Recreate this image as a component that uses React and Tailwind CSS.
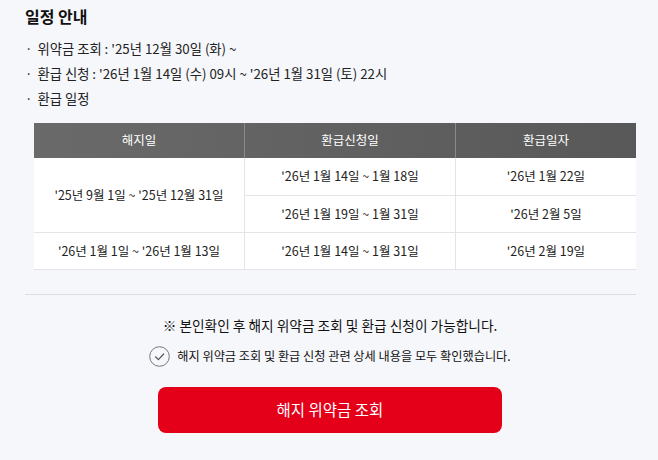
export default function App() {
  const font = { fontFamily: '"Noto Sans CJK KR", "Noto Sans", sans-serif' };
  return (
    <div className="h-[460px] w-[658px] overflow-hidden bg-[#f6f7fb] text-[#222]" style={font}>
      <div className="px-[25px] pt-[3px]">
        <h2 className="text-[16px] font-bold leading-[26px] text-[#111]">일정 안내</h2>
        <ul className="mt-[10px] flex flex-col gap-[5px] text-[13.3px] leading-[20px] text-[#222]">
          <li className="flex gap-[5px]"><span>·</span><span>위약금 조회 : '25년 12월 30일 (화) ~</span></li>
          <li className="flex gap-[5px]"><span>·</span><span>환급 신청 : '26년 1월 14일 (수) 09시 ~ '26년 1월 31일 (토) 22시</span></li>
          <li className="flex gap-[5px]"><span>·</span><span>환급 일정</span></li>
        </ul>

        <div className="ml-[9px] mt-[14px] w-[602px] text-[12.5px] text-[#222]">
          <div className="grid h-[35px] grid-cols-[211px_211px_180px] bg-gradient-to-r from-[#6a6a6a] to-[#585858] text-white">
            <div className="flex items-center justify-center border-r border-[#8a8a8a]">해지일</div>
            <div className="flex items-center justify-center border-r border-[#8a8a8a]">환급신청일</div>
            <div className="flex items-center justify-center">환급일자</div>
          </div>
          <div className="grid grid-cols-[211px_211px_180px] bg-white">
            <div className="row-span-2 flex items-center justify-center border-b border-r border-[#e4e4e6]">'25년 9월 1일 ~ '25년 12월 31일</div>
            <div className="flex h-[38px] items-center justify-center border-b border-r border-[#e4e4e6]">'26년 1월 14일 ~ 1월 18일</div>
            <div className="flex h-[38px] items-center justify-center border-b border-[#e4e4e6]">'26년 1월 22일</div>
            <div className="flex h-[37px] items-center justify-center border-b border-r border-[#e4e4e6]">'26년 1월 19일 ~ 1월 31일</div>
            <div className="flex h-[37px] items-center justify-center border-b border-[#e4e4e6]">'26년 2월 5일</div>
            <div className="flex h-[37px] items-center justify-center border-b border-r border-[#e4e4e6]">'26년 1월 1일 ~ '26년 1월 13일</div>
            <div className="flex h-[37px] items-center justify-center border-b border-r border-[#e4e4e6]">'26년 1월 14일 ~ 1월 31일</div>
            <div className="flex h-[37px] items-center justify-center border-b border-[#e4e4e6]">'26년 2월 19일</div>
          </div>
        </div>

        <div className="mt-[24px] h-px w-[611px] bg-[#dcdde0]" />

        <p className="mt-[20px] pl-[2px] text-center text-[13.7px] leading-[20px] text-[#111]">※ 본인확인 후 해지 위약금 조회 및 환급 신청이 가능합니다.</p>
        <div className="mt-[11px] flex items-center justify-center gap-[7px] pl-[2px] text-[12.2px] text-[#111]">
          <svg width="21" height="21" viewBox="0 0 21 21" fill="none">
            <circle cx="10.5" cy="10.5" r="9.8" stroke="#777" strokeWidth="1" />
            <path d="M6.5 10.8 L9.4 13.6 L14.6 8" stroke="#555" strokeWidth="1.2" strokeLinecap="round" strokeLinejoin="round" />
          </svg>
          <span>해지 위약금 조회 및 환급 신청 관련 상세 내용을 모두 확인했습니다.</span>
        </div>

        <div className="mt-[20px] flex justify-center pl-[2px]">
          <button className="h-[46px] w-[344px] rounded-[8px] bg-[#e50019] text-[15.5px] text-white">해지 위약금 조회</button>
        </div>
      </div>
    </div>
  );
}
